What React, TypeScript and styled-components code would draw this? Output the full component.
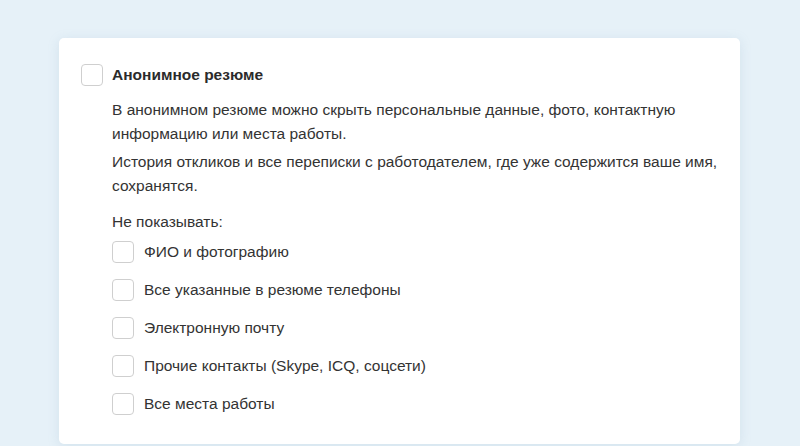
import React from "react";
import styled, { createGlobalStyle } from "styled-components";

const Global = createGlobalStyle`
  html, body { margin: 0; padding: 0; }
  body {
    background: #e6f1f8;
    font-family: "Liberation Sans", Arial, sans-serif;
    color: #333333;
    width: 800px;
    height: 446px;
    overflow: hidden;
  }
`;

const Page = styled.div`
  padding: 38px 60px 0 59px;
  height: 446px;
  box-sizing: border-box;
`;

const Card = styled.div`
  background: #ffffff;
  border-radius: 5px;
  box-shadow: 0 2px 12px rgba(120, 160, 190, 0.18);
  padding: 26px 10px 30px 22px;
  height: 406px;
  box-sizing: border-box;
`;

const Box = styled.span`
  display: inline-block;
  flex: none;
  width: 22px;
  height: 22px;
  box-sizing: border-box;
  border: 1px solid #cfcfcf;
  border-radius: 4px;
  background: #fff;
`;

const HeaderRow = styled.label`
  display: flex;
  align-items: center;
  gap: 9px;
  height: 22px;
`;

const Title = styled.span`
  font-size: 15.5px;
  font-weight: bold;
  color: #2b2b2b;
`;

const Body = styled.div`
  padding-left: 31px;
  max-width: 616px;
  margin-top: 12px;
`;

const Para = styled.p<{ $gap?: number }>`
  margin: 0 0 ${(p) => p.$gap ?? 4}px 0;
  font-size: 15.5px;
  line-height: 24px;
`;

const List = styled.div`
  display: flex;
  flex-direction: column;
  gap: 16px;
`;

const Item = styled.label`
  display: flex;
  align-items: center;
  gap: 10px;
  height: 22px;
  font-size: 15.5px;
`;

const items = [
  "ФИО и фотографию",
  "Все указанные в резюме телефоны",
  "Электронную почту",
  "Прочие контакты (Skype, ICQ, соцсети)",
  "Все места работы",
];

export default function App() {
  return (
    <>
      <Global />
      <Page>
        <Card>
          <HeaderRow>
            <Box />
            <Title>Анонимное резюме</Title>
          </HeaderRow>
          <Body>
            <Para>
              В анонимном резюме можно скрыть персональные данные, фото, контактную
              информацию или места работы.
            </Para>
            <Para $gap={12}>
              История откликов и все переписки с работодателем, где уже содержится ваше имя,
              сохранятся.
            </Para>
            <Para $gap={7}>Не показывать:</Para>
            <List>
              {items.map((t) => (
                <Item key={t}>
                  <Box />
                  {t}
                </Item>
              ))}
            </List>
          </Body>
        </Card>
      </Page>
    </>
  );
}
